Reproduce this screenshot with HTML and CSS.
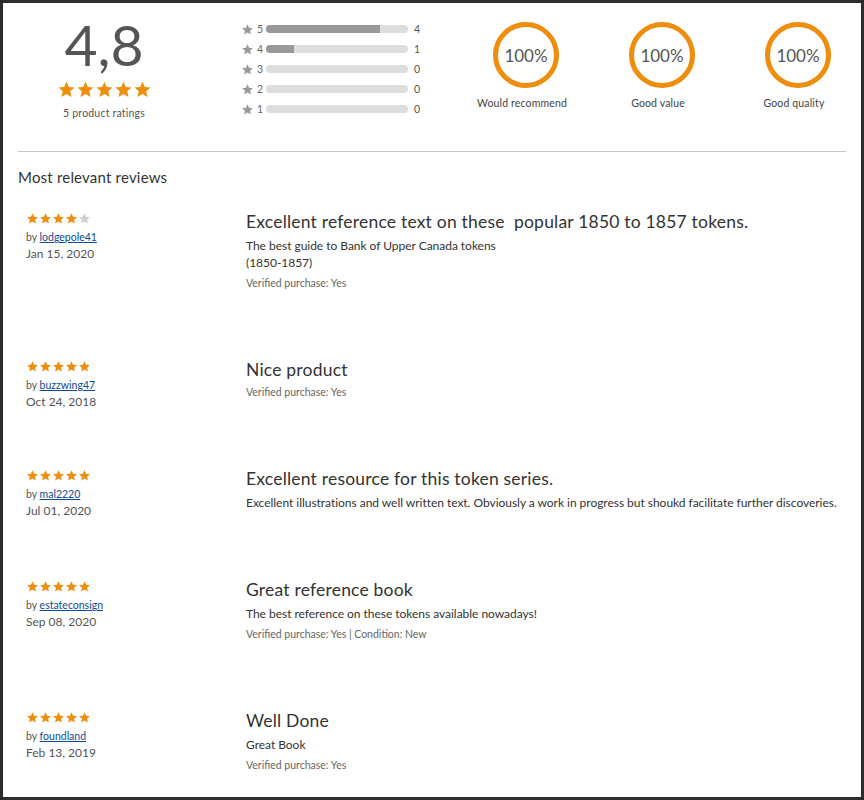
FILE: index.html
```html
<!DOCTYPE html>
<html lang="en">
<head>
  <meta charset="UTF-8" />
  <meta name="viewport" content="width=device-width, initial-scale=1.0"/>
  <title>Product reviews</title>
  <link rel="stylesheet" href="styles.css">
</head>
<body>
  <svg class="icon-defs" aria-hidden="true">
    <symbol id="star" viewBox="0 0 24 24">
      <path d="M12 2.2l2.95 6.6 7.15.7-5.4 4.8 1.6 7.1L12 17.7l-6.3 3.7 1.6-7.1-5.4-4.8 7.15-.7z"/>
    </symbol>
  </svg>

  <main class="page">
    <section class="summary">
      <div class="score">
        <div class="score-value">4,8</div>
        <div class="stars stars-lg">
          <svg class="star on"><use href="#star"/></svg>
          <svg class="star on"><use href="#star"/></svg>
          <svg class="star on"><use href="#star"/></svg>
          <svg class="star on"><use href="#star"/></svg>
          <svg class="star on"><use href="#star"/></svg>
        </div>
        <div class="score-count">5 product ratings</div>
      </div>

      <ul class="histogram">
        <li class="hist-row">
          <svg class="hist-star"><use href="#star"/></svg>
          <span class="hist-num">5</span>
          <span class="hist-bar"><span class="hist-fill" style="width: 80%"></span></span>
          <span class="hist-count">4</span>
        </li>
        <li class="hist-row">
          <svg class="hist-star"><use href="#star"/></svg>
          <span class="hist-num">4</span>
          <span class="hist-bar"><span class="hist-fill" style="width: 20%"></span></span>
          <span class="hist-count">1</span>
        </li>
        <li class="hist-row">
          <svg class="hist-star"><use href="#star"/></svg>
          <span class="hist-num">3</span>
          <span class="hist-bar"><span class="hist-fill" style="width: 0%"></span></span>
          <span class="hist-count">0</span>
        </li>
        <li class="hist-row">
          <svg class="hist-star"><use href="#star"/></svg>
          <span class="hist-num">2</span>
          <span class="hist-bar"><span class="hist-fill" style="width: 0%"></span></span>
          <span class="hist-count">0</span>
        </li>
        <li class="hist-row">
          <svg class="hist-star"><use href="#star"/></svg>
          <span class="hist-num">1</span>
          <span class="hist-bar"><span class="hist-fill" style="width: 0%"></span></span>
          <span class="hist-count">0</span>
        </li>
      </ul>

      <div class="aspects">
        <div class="aspect">
          <div class="ring">100%</div>
          <div class="aspect-label">Would recommend</div>
        </div>
        <div class="aspect">
          <div class="ring">100%</div>
          <div class="aspect-label">Good value</div>
        </div>
        <div class="aspect">
          <div class="ring">100%</div>
          <div class="aspect-label">Good quality</div>
        </div>
      </div>
    </section>

    <hr class="divider">

    <h2 class="reviews-heading">Most relevant reviews</h2>

    <ul class="reviews">
      <li class="review">
        <div class="review-meta">
          <div class="stars stars-sm">
            <svg class="star on"><use href="#star"/></svg>
            <svg class="star on"><use href="#star"/></svg>
            <svg class="star on"><use href="#star"/></svg>
            <svg class="star on"><use href="#star"/></svg>
            <svg class="star off"><use href="#star"/></svg>
          </div>
          <div class="review-author">by <a href="#">lodgepole41</a></div>
          <div class="review-date">Jan 15, 2020</div>
        </div>
        <div class="review-body">
          <h3 class="review-title">Excellent reference text on these&nbsp; popular 1850 to 1857 tokens.</h3>
          <p class="review-text">The best guide to Bank of Upper Canada tokens<br>(1850-1857)</p>
          <p class="review-verified">Verified purchase: Yes</p>
        </div>
      </li>

      <li class="review">
        <div class="review-meta">
          <div class="stars stars-sm">
            <svg class="star on"><use href="#star"/></svg>
            <svg class="star on"><use href="#star"/></svg>
            <svg class="star on"><use href="#star"/></svg>
            <svg class="star on"><use href="#star"/></svg>
            <svg class="star on"><use href="#star"/></svg>
          </div>
          <div class="review-author">by <a href="#">buzzwing47</a></div>
          <div class="review-date">Oct 24, 2018</div>
        </div>
        <div class="review-body">
          <h3 class="review-title">Nice product</h3>
          <p class="review-verified">Verified purchase: Yes</p>
        </div>
      </li>

      <li class="review">
        <div class="review-meta">
          <div class="stars stars-sm">
            <svg class="star on"><use href="#star"/></svg>
            <svg class="star on"><use href="#star"/></svg>
            <svg class="star on"><use href="#star"/></svg>
            <svg class="star on"><use href="#star"/></svg>
            <svg class="star on"><use href="#star"/></svg>
          </div>
          <div class="review-author">by <a href="#">mal2220</a></div>
          <div class="review-date">Jul 01, 2020</div>
        </div>
        <div class="review-body">
          <h3 class="review-title">Excellent resource for this token series.</h3>
          <p class="review-text">Excellent illustrations and well written text. Obviously a work in progress but shoukd facilitate further discoveries.</p>
        </div>
      </li>

      <li class="review">
        <div class="review-meta">
          <div class="stars stars-sm">
            <svg class="star on"><use href="#star"/></svg>
            <svg class="star on"><use href="#star"/></svg>
            <svg class="star on"><use href="#star"/></svg>
            <svg class="star on"><use href="#star"/></svg>
            <svg class="star on"><use href="#star"/></svg>
          </div>
          <div class="review-author">by <a href="#">estateconsign</a></div>
          <div class="review-date">Sep 08, 2020</div>
        </div>
        <div class="review-body">
          <h3 class="review-title">Great reference book</h3>
          <p class="review-text">The best reference on these tokens available nowadays!</p>
          <p class="review-verified">Verified purchase: Yes | Condition: New</p>
        </div>
      </li>

      <li class="review">
        <div class="review-meta">
          <div class="stars stars-sm">
            <svg class="star on"><use href="#star"/></svg>
            <svg class="star on"><use href="#star"/></svg>
            <svg class="star on"><use href="#star"/></svg>
            <svg class="star on"><use href="#star"/></svg>
            <svg class="star on"><use href="#star"/></svg>
          </div>
          <div class="review-author">by <a href="#">foundland</a></div>
          <div class="review-date">Feb 13, 2019</div>
        </div>
        <div class="review-body">
          <h3 class="review-title">Well Done</h3>
          <p class="review-text">Great Book</p>
          <p class="review-verified">Verified purchase: Yes</p>
        </div>
      </li>
    </ul>
  </main>
</body>
</html>
```

FILE: styles.css
```css
* {
  box-sizing: border-box;
}

html, body {
  margin: 0;
  height: 100%;
}

body {
  font-family: Lato, "Liberation Sans", sans-serif;
  color: #333333;
  background-color: #ffffff;
  border: 3px solid #2d2d2d;
  overflow: hidden;
}

.icon-defs {
  position: absolute;
  width: 0;
  height: 0;
}

.page {
  padding: 16px 15px 0;
}

ul {
  list-style: none;
  margin: 0;
  padding: 0;
}

/* rating summary */
.summary {
  display: flex;
  align-items: flex-start;
}

.summary > * {
  flex-shrink: 0;
}

.score {
  width: 172px;
  margin-right: 51px;
  text-align: center;
}

.score-value {
  font-size: 57px;
  line-height: 50px;
  color: #555555;
}

.stars {
  display: flex;
}

.stars-lg {
  justify-content: center;
  margin-top: 11px;
}

.stars-lg .star {
  width: 19px;
  height: 19px;
}

.star.on {
  fill: #ef8d0c;
}

.star.off {
  fill: #cfcfcf;
}

.score-count {
  margin-top: 7px;
  font-size: 10.5px;
  line-height: 14px;
  letter-spacing: 0.2px;
  color: #555555;
}

.histogram {
  width: 180px;
}

.hist-row {
  display: flex;
  align-items: center;
  height: 20px;
  font-size: 10.5px;
  color: #666666;
}

.hist-star {
  width: 13px;
  height: 13px;
  fill: #9b9b9b;
}

.hist-num {
  width: 12px;
  padding-left: 3px;
}

.hist-bar {
  width: 142px;
  height: 8px;
  border-radius: 4px;
  background-color: #dddddd;
  overflow: hidden;
}

.hist-fill {
  display: block;
  height: 100%;
  background-color: #999999;
}

.hist-count {
  margin-left: 6px;
  color: #555555;
}

.aspects {
  display: flex;
  gap: 26px;
  margin-left: 50px;
  margin-top: 3px;
}

.aspect {
  width: 110px;
  display: flex;
  flex-direction: column;
  align-items: center;
}

.ring {
  width: 66px;
  height: 66px;
  border: 5px solid #ef8d0c;
  border-radius: 50%;
  display: flex;
  align-items: center;
  justify-content: center;
  font-size: 17px;
  color: #555555;
}

.aspect-label {
  margin-top: 8px;
  padding-right: 8px;
  font-size: 10.5px;
  line-height: 14px;
  letter-spacing: 0.15px;
  color: #444444;
  white-space: nowrap;
}

.divider {
  border: 0;
  border-top: 1px solid #c8c8c8;
  margin: 31px 0 15px;
}

.reviews-heading {
  margin: 0;
  font-size: 15px;
  line-height: 20px;
  font-weight: 400;
  letter-spacing: 0.2px;
  color: #333333;
}

/* reviews */
.reviews {
  margin-top: 23px;
}

.review {
  display: flex;
  align-items: flex-start;
}

.review-meta {
  width: 228px;
  flex-shrink: 0;
  padding-left: 8px;
  padding-top: 2px;
}

.stars-sm .star {
  width: 13px;
  height: 13px;
}

.review-author {
  margin-top: 5px;
  font-size: 10.5px;
  line-height: 14px;
  color: #555555;
}

.review-author a {
  color: #0f4a93;
}

.review-date {
  margin-top: 2px;
  font-size: 12px;
  line-height: 16px;
  color: #555555;
}

.review-body {
  padding-bottom: 67px;
}

.review-title {
  margin: 0;
  font-size: 17.5px;
  line-height: 24px;
  font-weight: 400;
  letter-spacing: 0.2px;
  color: #333333;
}

.review-text {
  margin: 3px 0 0;
  font-size: 12px;
  line-height: 17px;
  letter-spacing: -0.03px;
  color: #333333;
}

.review-verified {
  margin: 3px 0 0;
  font-size: 10.5px;
  line-height: 15px;
  color: #666666;
}

.review-text + .review-verified {
  margin-top: 5px;
}
```
